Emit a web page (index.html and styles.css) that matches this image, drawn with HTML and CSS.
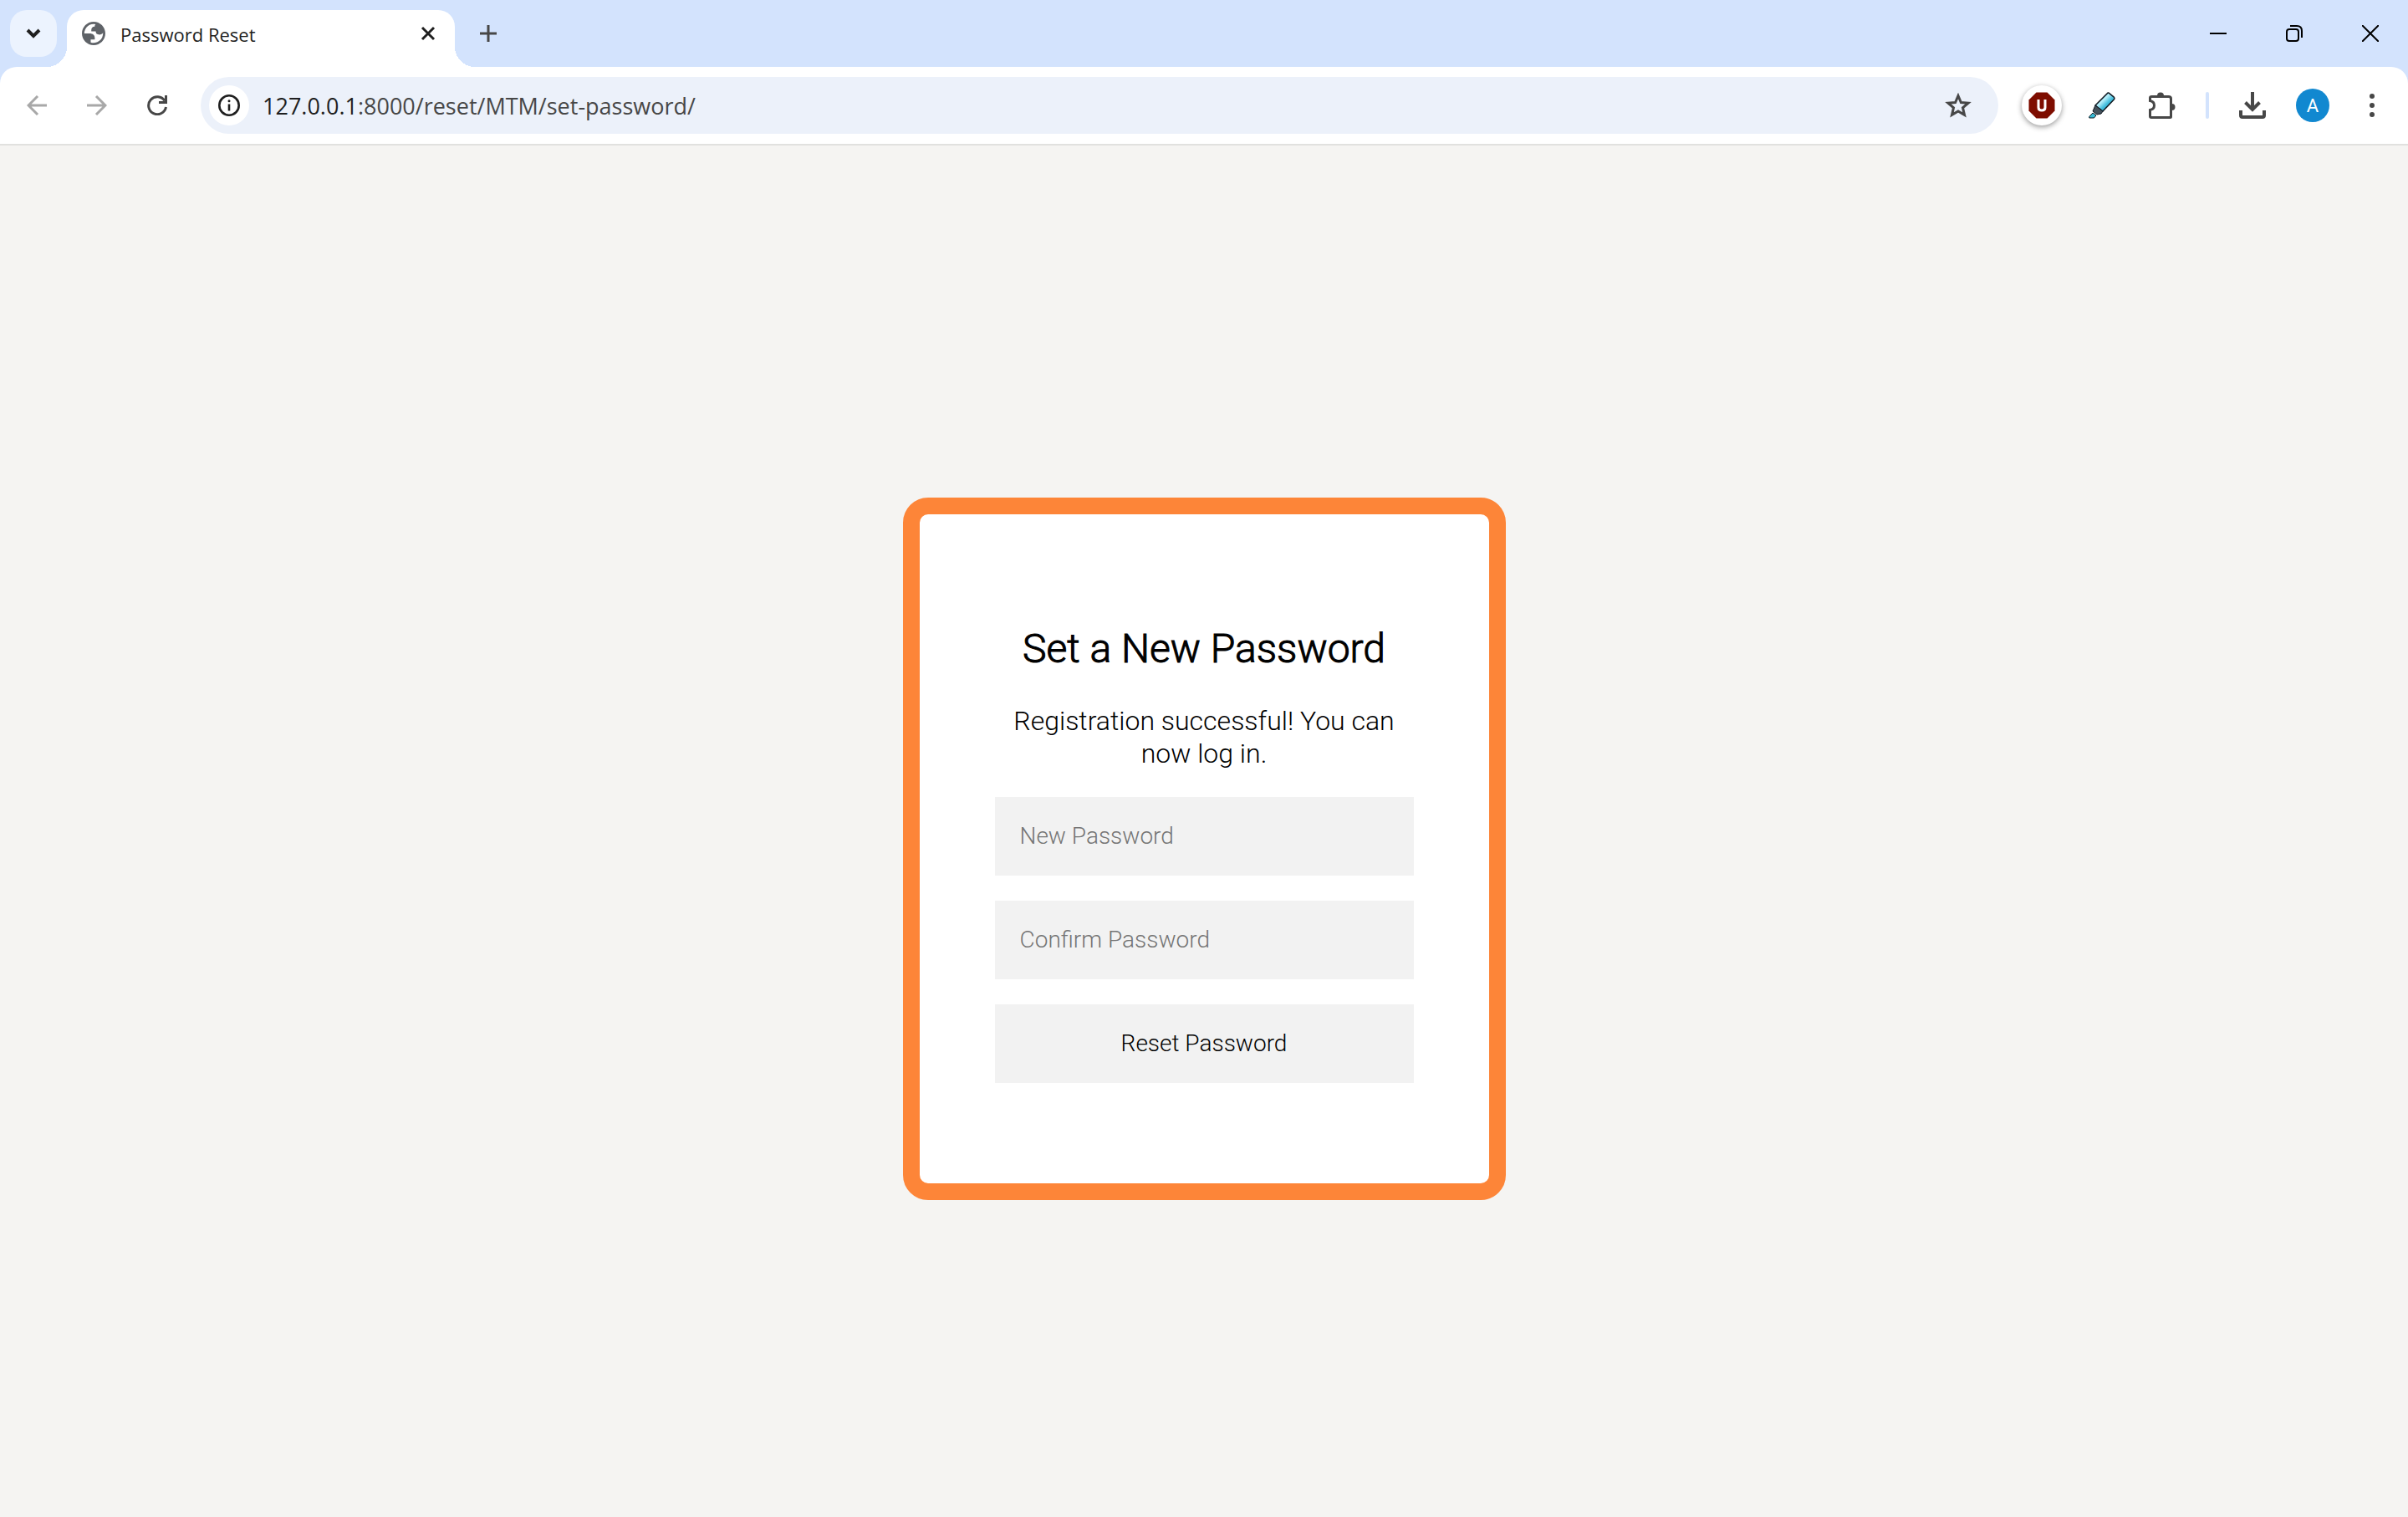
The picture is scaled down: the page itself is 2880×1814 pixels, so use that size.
FILE: index.html
```html
<!DOCTYPE html>
<html lang="en">
<head>
<meta charset="utf-8">
<title>Password Reset</title>
<link rel="stylesheet" href="styles.css">
</head>
<body>
<header class="browser">
  <div class="tabstrip">
    <button class="tab-search" aria-label="Search tabs"><svg width="18" height="14" viewBox="0 0 18 14"><path d="M2 3l7 7 7-7" fill="none" stroke="#1f1f1f" stroke-width="4"/></svg></button>
    <div class="tab">
      <svg class="favicon" viewBox="2 2 20 20"><path fill="#5f6368" fill-rule="evenodd" d="M12 2C6.480 2 2 6.480 2 12s4.480 10 10 10 10-4.480 10-10S17.520 2 12 2zM4 12h4.400c3.407.022 4.922 1.730 4.543 5.127H9.488v2.470a8.004 8.004 0 0 0 10.498-8.083C19.327 12.504 18.332 13 17 13c-2.137 0-3.206-.916-3.206-2.750h-3.748c-.274-2.728.683-4.092 2.870-4.092 0-.975.327-1.597.811-1.970A8.004 8.004 0 0 0 4 12z"/></svg>
      <span class="tab-title">Password Reset</span>
      <button class="icon-button tab-close" aria-label="Close tab"><svg width="18" height="18" viewBox="0 0 18 18"><path d="M2 2l14 14M16 2L2 16" stroke="#1f1f1f" stroke-width="3"/></svg></button>
    </div>
    <button class="icon-button new-tab" aria-label="New tab"><svg width="20" height="20" viewBox="0 0 20 20"><path d="M10 0v20M0 10h20" stroke="#474747" stroke-width="3"/></svg></button>
    <div class="window-controls">
      <button class="icon-button" aria-label="Minimize"><svg width="20" height="20" viewBox="0 0 20 20"><path d="M0 10h20" stroke="#000" stroke-width="2"/></svg></button>
      <button class="icon-button" aria-label="Restore"><svg width="20" height="20" viewBox="0 0 20 20" fill="none" stroke="#000" stroke-width="2"><rect x="1" y="5" width="14" height="14" rx="3"/><path d="M5 1h8q6 0 6 6v8"/></svg></button>
      <button class="icon-button" aria-label="Close window"><svg width="20" height="20" viewBox="0 0 20 20"><path d="M0 0l20 20M20 0L0 20" stroke="#000" stroke-width="2"/></svg></button>
    </div>
  </div>
  <div class="toolbar">
    <nav class="history">
      <button class="icon-button" aria-label="Back"><svg width="24" height="24" viewBox="0 0 24 24"><path d="M24 12H2M13 1L2 12l11 11" fill="none" stroke="#a8a8a8" stroke-width="3"/></svg></button>
      <button class="icon-button" aria-label="Forward"><svg width="24" height="24" viewBox="0 0 24 24"><path d="M0 12h22M11 1l11 11-11 11" fill="none" stroke="#a8a8a8" stroke-width="3"/></svg></button>
      <button class="icon-button" aria-label="Reload"><svg width="24" height="24" viewBox="0 0 24 24"><path d="M22.500 14A10.500 10.500 0 1 1 21 6.500M22.500 0v8.500H14" fill="none" stroke="#474747" stroke-width="3"/></svg></button>
    </nav>
    <div class="omnibox">
      <button class="site-info" aria-label="View site information"><svg width="26" height="26" viewBox="0 0 26 26"><circle cx="13" cy="13" r="11.700" fill="none" stroke="#1f1f1f" stroke-width="2.600"/><path d="M13 11.500v8" stroke="#1f1f1f" stroke-width="2.600"/><circle cx="13" cy="7.800" r="1.500" fill="#1f1f1f"/></svg></button>
      <label class="host" for="address">127.0.0.1</label><input class="address" id="address" type="text" value=":8000/reset/MTM/set-password/">
      <button class="icon-button" aria-label="Bookmark this tab"><svg width="32" height="30" viewBox="0 0 32 30"><path d="M16 3.500l3.400 8 8.700.7-6.600 5.700 2 8.500-7.500-4.500-7.500 4.500 2-8.500-6.600-5.700 8.700-.7z" fill="none" stroke="#474747" stroke-width="3"/></svg></button>
    </div>
    <div class="extensions">
      <button class="icon-button blocker" aria-label="Content blocker"><svg width="32" height="32" viewBox="0 0 32 32"><path d="M9.500.5h13l9 9v13l-9 9h-13l-9-9v-13z" fill="#7e0d00"/><path d="M12 9v9.500q0 3.500 4 3.500t4-3.500V9" fill="none" stroke="#fff" stroke-width="3"/></svg></button>
      <button class="icon-button" aria-label="Highlighter"><svg width="32" height="32" viewBox="0 0 32 32"><defs><linearGradient id="pen" x1="0" y1="0" x2="1" y2="1"><stop offset=".2" stop-color="#68c7df"/><stop offset=".4" stop-color="#b8effa"/><stop offset=".6" stop-color="#43bddd"/><stop offset="1" stop-color="#168baa"/></linearGradient></defs><path d="M8 16L22 2q1-1.300 2.500-.7l5.500 4.500q1.500 1.500.5 3L17 23z" fill="url(#pen)" stroke="#101820" stroke-width="1.500"/><path d="M8 16l9 7-2 3-5 1-5-4z" fill="#45515b" stroke="#101820"/><path d="M5 25l4 3-2.500 3H.8v-1.500z" fill="#38bcd7" stroke="#101820"/></svg></button>
      <button class="icon-button" aria-label="Extensions"><svg width="32" height="32" viewBox="0 0 32 32"><path d="M3.500 5.500h20q3 0 3 2.500v21.500q0 1-1 1H3q-1.500 0-1.500-1.500v-7.500q5-1 5-5.500t-5-5.500V7q0-1.500 2-1.500z" fill="none" stroke="#474747" stroke-width="3"/><path d="M10 4.500a4 4 0 0 1 8 0zM27.500 14a4 4 0 0 1 0 8z" fill="#474747"/></svg></button>
    </div>
    <span class="divider"></span>
    <div class="account">
      <button class="icon-button" aria-label="Downloads"><svg width="32" height="32" viewBox="0 0 32 32" fill="none" stroke="#474747" stroke-width="4"><path d="M16 0v20M7.500 12.500L16 21l8.500-8.500M2 22v6q0 2 2 2h24q2 0 2-2v-6"/></svg></button>
      <button class="avatar" aria-label="Profile">A</button>
      <button class="icon-button" aria-label="Menu"><svg width="6" height="28" viewBox="0 0 6 28" fill="#474747"><circle cx="3" cy="3" r="3"/><circle cx="3" cy="14" r="3"/><circle cx="3" cy="25" r="3"/></svg></button>
    </div>
  </div>
</header>
<main class="page">
  <form class="card">
    <h1 class="card-title">Set a New Password</h1>
    <p class="message">Registration successful! You can now log in.</p>
    <input class="field" type="password" placeholder="New Password" aria-label="New Password">
    <input class="field" type="password" placeholder="Confirm Password" aria-label="Confirm Password">
    <button class="field submit" type="button">Reset Password</button>
  </form>
</main>
</body>
</html>
```
FILE: styles.css
```css
* { box-sizing: border-box; }

body {
  margin: 0;
  min-height: 100vh;
  display: flex;
  flex-direction: column;
  background: #f5f4f2;
  font-family: Roboto, sans-serif;
}

button, input {
  margin: 0;
  padding: 0;
  border: 0;
  background: none;
  font: inherit;
  color: inherit;
}

svg { display: block; }

.browser {
  background: #d3e3fd;
  font-family: "Open Sans", "Noto Sans", sans-serif;
  color: #1f1f1f;
}

.icon-button {
  display: flex;
  align-items: center;
  justify-content: center;
  flex: none;
}

/* Tab strip */
.tabstrip {
  display: flex;
  height: 80px;
  padding: 12px 0 0 12px;
}

.tab-search {
  display: flex;
  align-items: center;
  justify-content: center;
  width: 56px;
  height: 56px;
  border-radius: 20px;
  background: #ecf3fe;
}

.tab {
  position: relative;
  display: flex;
  align-items: center;
  width: 464px;
  margin-left: 12px;
  padding: 0 22px 12px 18px;
  border-radius: 20px 20px 0 0;
  background: #fff;
}

.tab::before,
.tab::after {
  content: "";
  position: absolute;
  bottom: 0;
  width: 24px;
  height: 24px;
}

.tab::before {
  right: 100%;
  background: radial-gradient(circle at 0 0, transparent 24px, #fff 24px);
}

.tab::after {
  left: 100%;
  background: radial-gradient(circle at 100% 0, transparent 24px, #fff 24px);
}

.favicon {
  width: 28px;
  height: 28px;
}

.tab-title {
  flex: 1;
  margin-left: 18px;
  padding-top: 2px;
  font-size: 22px;
  line-height: 32px;
}

.tab-close { width: 20px; }

.new-tab {
  width: 56px;
  height: 56px;
  margin-left: 12px;
}

.window-controls {
  display: flex;
  height: 56px;
  margin-left: auto;
}

.window-controls .icon-button { width: 91px; }

/* Toolbar */
.toolbar {
  display: flex;
  align-items: center;
  height: 94px;
  padding: 0 28px 0 16px;
  border-bottom: 2px solid #e1e1df;
  border-radius: 20px 20px 0 0;
  background: #fff;
}

.history {
  display: flex;
  gap: 16px;
}

.history .icon-button {
  width: 56px;
  height: 56px;
}

.omnibox {
  display: flex;
  align-items: center;
  flex: 1;
  height: 68px;
  margin-left: 24px;
  padding: 0 32px 0 10px;
  border-radius: 34px;
  background: #ecf1fa;
  font-size: 27px;
}

.site-info {
  display: flex;
  align-items: center;
  justify-content: center;
  width: 48px;
  height: 48px;
  margin-right: 16px;
  border-radius: 50%;
  background: #fff;
}

.address {
  flex: 1;
  min-width: 0;
  color: #474747;
}

.extensions {
  display: flex;
  align-items: center;
  gap: 16px;
  margin-left: 24px;
}

.extensions .icon-button {
  width: 56px;
  height: 56px;
}

.extensions .blocker {
  width: 48px;
  height: 48px;
  margin: 0 4px;
  border-radius: 50%;
  box-shadow: 0 2px 6px rgba(0, 0, 0, 0.4);
}

.divider {
  width: 4px;
  height: 32px;
  margin: 0 36px 0 24px;
  border-radius: 2px;
  background: #d3e3fd;
}

.account {
  display: flex;
  align-items: center;
  gap: 36px;
}

.avatar {
  width: 40px;
  height: 40px;
  border-radius: 50%;
  background: #1188d0;
  color: #fff;
  font-family: Roboto, sans-serif;
  font-size: 22px;
}

.account .icon-button:last-child { width: 30px; }

/* Page */
.page {
  flex: 1;
  display: flex;
  align-items: center;
  justify-content: center;
  padding-top: 41px;
}

.card {
  display: flex;
  flex-direction: column;
  gap: 30px;
  width: 721px;
  padding: 120px 90px;
  border: 20px solid #fd8538;
  border-radius: 30px;
  background: #fff;
  font-weight: 300;
  text-align: center;
  color: #000;
}

.card-title {
  margin: 12px 0 0;
  font-size: 48px;
  font-weight: 300;
  line-height: 58px;
  -webkit-text-stroke: 1px #000;
}

.message {
  margin: 8px 0 2px;
  font-size: 32px;
  line-height: 39px;
}

.field {
  height: 94px;
  padding: 0 30px;
  background: #f2f2f2;
  font-size: 28px;
}

.field::placeholder {
  color: #757575;
  opacity: 1;
}
```
